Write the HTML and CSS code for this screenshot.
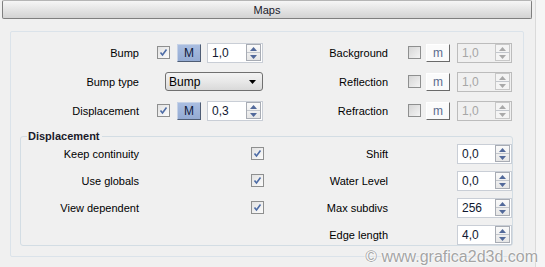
FILE: index.html
```html
<!DOCTYPE html>
<html>
<head>
<meta charset="utf-8">
<link rel="stylesheet" href="styles.css">
</head>
<body>
<div class="app">
  <div class="main">
    <div class="rollout-header">Maps</div>
    <div class="panel">
      <div class="top-grid">
        <div class="label">Bump</div>
        <div class="ctrls ctrls-left">
          <span class="check checked"><svg viewBox="0 0 11 11" width="11" height="11"><path d="M2.5 5.5 L4.5 8 L8.5 2.5" fill="none" stroke="#4d6ca6" stroke-width="1.6"/></svg></span>
          <span class="mbtn on">M</span>
          <span class="spin"><span class="val">1,0</span><span class="arrows"><span class="up"><svg viewBox="0 0 7 4" width="7" height="4"><path d="M0 4 L3.5 0 L7 4Z" fill="#52699a"/></svg></span><span class="dn"><svg viewBox="0 0 7 4" width="7" height="4"><path d="M0 0 L3.5 4 L7 0Z" fill="#52699a"/></svg></span></span></span>
        </div>
        <div class="label">Background</div>
        <div class="ctrls ctrls-right">
          <span class="check"></span>
          <span class="mbtn off">m</span>
          <span class="spin disabled"><span class="val">1,0</span><span class="arrows"><span class="up"><svg viewBox="0 0 7 4" width="7" height="4"><path d="M0 4 L3.5 0 L7 4Z" fill="#a9a9a9"/></svg></span><span class="dn"><svg viewBox="0 0 7 4" width="7" height="4"><path d="M0 0 L3.5 4 L7 0Z" fill="#a9a9a9"/></svg></span></span></span>
        </div>

        <div class="label">Bump type</div>
        <div class="ctrls ctrls-left">
          <span class="dropdown"><span>Bump</span><svg viewBox="0 0 7 4" width="7" height="4"><path d="M0 0 L3.5 4 L7 0Z" fill="#000"/></svg></span>
        </div>
        <div class="label">Reflection</div>
        <div class="ctrls ctrls-right">
          <span class="check"></span>
          <span class="mbtn off">m</span>
          <span class="spin disabled"><span class="val">1,0</span><span class="arrows"><span class="up"><svg viewBox="0 0 7 4" width="7" height="4"><path d="M0 4 L3.5 0 L7 4Z" fill="#a9a9a9"/></svg></span><span class="dn"><svg viewBox="0 0 7 4" width="7" height="4"><path d="M0 0 L3.5 4 L7 0Z" fill="#a9a9a9"/></svg></span></span></span>
        </div>

        <div class="label">Displacement</div>
        <div class="ctrls ctrls-left">
          <span class="check checked"><svg viewBox="0 0 11 11" width="11" height="11"><path d="M2.5 5.5 L4.5 8 L8.5 2.5" fill="none" stroke="#4d6ca6" stroke-width="1.6"/></svg></span>
          <span class="mbtn on">M</span>
          <span class="spin"><span class="val">0,3</span><span class="arrows"><span class="up"><svg viewBox="0 0 7 4" width="7" height="4"><path d="M0 4 L3.5 0 L7 4Z" fill="#52699a"/></svg></span><span class="dn"><svg viewBox="0 0 7 4" width="7" height="4"><path d="M0 0 L3.5 4 L7 0Z" fill="#52699a"/></svg></span></span></span>
        </div>
        <div class="label">Refraction</div>
        <div class="ctrls ctrls-right">
          <span class="check"></span>
          <span class="mbtn off">m</span>
          <span class="spin disabled"><span class="val">1,0</span><span class="arrows"><span class="up"><svg viewBox="0 0 7 4" width="7" height="4"><path d="M0 4 L3.5 0 L7 4Z" fill="#a9a9a9"/></svg></span><span class="dn"><svg viewBox="0 0 7 4" width="7" height="4"><path d="M0 0 L3.5 4 L7 0Z" fill="#a9a9a9"/></svg></span></span></span>
        </div>
      </div>

      <div class="group">
        <div class="group-title">Displacement</div>
        <div class="group-grid">
          <div class="label">Keep continuity</div>
          <div class="cell-end"><span class="check checked"><svg viewBox="0 0 11 11" width="11" height="11"><path d="M2.5 5.5 L4.5 8 L8.5 2.5" fill="none" stroke="#4d6ca6" stroke-width="1.6"/></svg></span></div>
          <div class="label">Shift</div>
          <div class="cell-end"><span class="spin wide"><span class="val">0,0</span><span class="arrows"><span class="up"><svg viewBox="0 0 7 4" width="7" height="4"><path d="M0 4 L3.5 0 L7 4Z" fill="#52699a"/></svg></span><span class="dn"><svg viewBox="0 0 7 4" width="7" height="4"><path d="M0 0 L3.5 4 L7 0Z" fill="#52699a"/></svg></span></span></span></div>

          <div class="label">Use globals</div>
          <div class="cell-end"><span class="check checked"><svg viewBox="0 0 11 11" width="11" height="11"><path d="M2.5 5.5 L4.5 8 L8.5 2.5" fill="none" stroke="#4d6ca6" stroke-width="1.6"/></svg></span></div>
          <div class="label">Water Level</div>
          <div class="cell-end"><span class="spin wide"><span class="val">0,0</span><span class="arrows"><span class="up"><svg viewBox="0 0 7 4" width="7" height="4"><path d="M0 4 L3.5 0 L7 4Z" fill="#52699a"/></svg></span><span class="dn"><svg viewBox="0 0 7 4" width="7" height="4"><path d="M0 0 L3.5 4 L7 0Z" fill="#52699a"/></svg></span></span></span></div>

          <div class="label">View dependent</div>
          <div class="cell-end"><span class="check checked"><svg viewBox="0 0 11 11" width="11" height="11"><path d="M2.5 5.5 L4.5 8 L8.5 2.5" fill="none" stroke="#4d6ca6" stroke-width="1.6"/></svg></span></div>
          <div class="label">Max subdivs</div>
          <div class="cell-end"><span class="spin wide"><span class="val">256</span><span class="arrows"><span class="up"><svg viewBox="0 0 7 4" width="7" height="4"><path d="M0 4 L3.5 0 L7 4Z" fill="#52699a"/></svg></span><span class="dn"><svg viewBox="0 0 7 4" width="7" height="4"><path d="M0 0 L3.5 4 L7 0Z" fill="#52699a"/></svg></span></span></span></div>

          <div></div>
          <div></div>
          <div class="label">Edge length</div>
          <div class="cell-end"><span class="spin wide"><span class="val">4,0</span><span class="arrows"><span class="up"><svg viewBox="0 0 7 4" width="7" height="4"><path d="M0 4 L3.5 0 L7 4Z" fill="#52699a"/></svg></span><span class="dn"><svg viewBox="0 0 7 4" width="7" height="4"><path d="M0 0 L3.5 4 L7 0Z" fill="#52699a"/></svg></span></span></span></div>
        </div>
      </div>
    </div>
  </div>
  <div class="track"></div>
</div>
<div class="watermark">© www.grafica2d3d.com</div>
</body>
</html>
```

FILE: styles.css
```css
* { box-sizing: border-box; }
html, body { margin: 0; padding: 0; }
body {
  width: 545px;
  height: 267px;
  overflow: hidden;
  position: relative;
  background: #f0f0f0;
  font-family: "Liberation Sans", Arial, sans-serif;
  font-size: 11px;
  color: #000;
}
.app {
  display: flex;
  height: 267px;
}
.main {
  width: 535px;
  background: #f0f0f0;
}
.track {
  width: 10px;
  border-left: 1px solid #dadada;
  background: #f5f5f5;
}
.rollout-header {
  margin: 0 3px 0 2px;
  height: 19px;
  border: 1px solid #7f7f7f;
  border-top-color: #b5b5b5;
  border-radius: 2px;
  background: linear-gradient(#f6f6f6, #e6e6e6 45%, #d3d3d3);
  text-align: center;
  line-height: 18px;
  color: #1a1a2a;
}
.panel {
  margin: 12px 11px 0 10px;
  height: 226px;
  border: 1px solid #dbe3ea;
  border-radius: 2px;
}
.top-grid {
  display: grid;
  grid-template-columns: 128px 124px 125px 124px;
  grid-auto-rows: 29px;
  padding-top: 6px;
  align-items: center;
}
.label {
  text-align: right;
  white-space: nowrap;
}
.ctrls {
  display: flex;
  align-items: center;
}
.ctrls-left { padding-left: 18px; }
.ctrls-right { padding-left: 20px; }
.ctrls-left .mbtn { margin-left: 7px; }
.ctrls-left .spin { margin-left: 6px; width: 56px; }
.ctrls-right .mbtn { margin-left: 5px; }
.ctrls-right .spin { margin-left: 7px; width: 55px; }

.check {
  width: 13px;
  height: 13px;
  border: 1px solid #8e8f8f;
  background: linear-gradient(135deg, #d6d6d6, #f4f4f4);
  display: inline-flex;
  align-items: center;
  justify-content: center;
  flex: none;
}
.check.checked {
  background: linear-gradient(135deg, #e2e2e2, #fbfbfb);
}
.check svg { display: block; }

.mbtn {
  width: 24px;
  height: 18px;
  display: inline-flex;
  align-items: center;
  justify-content: center;
  font-size: 12px;
  flex: none;
}
.mbtn.on {
  background: linear-gradient(#a9bde0, #94abd3);
  border: 1px solid #c6d2e6;
  border-right-color: #4f5d74;
  border-bottom-color: #4f5d74;
  color: #0e1a3a;
}
.mbtn.off {
  background: #fbfbfb;
  border: 1px solid #ffffff;
  border-right-color: #6a6a6a;
  border-bottom-color: #6a6a6a;
  color: #5c6c8e;
}

.spin {
  height: 20px;
  display: inline-flex;
  align-items: center;
  background: #fff;
  border: 1px solid #c9ced6;
  flex: none;
}
.spin .val {
  flex: 1;
  padding-left: 4px;
  font-size: 12px;
  color: #101830;
}
.spin .arrows {
  width: 15px;
  height: 17px;
  margin-right: 1px;
  border: 1px solid #a8acb4;
  display: flex;
  flex-direction: column;
  background: linear-gradient(#fafafa, #e6e6e6);
}
.spin .up, .spin .dn {
  flex: 1;
  display: flex;
  align-items: center;
  justify-content: center;
}
.spin .up { border-bottom: 1px solid #c2c6cc; }
.spin .arrows svg { display: block; }
.spin.disabled {
  background: #f0f0f0;
  border-color: #bcbcbc;
}
.spin.disabled .val { color: #a6a6a6; }
.spin.disabled .arrows {
  border-color: #c8c8c8;
  background: #f4f4f4;
}
.spin.wide { width: 55px; }

.dropdown {
  margin-left: 8px;
  width: 98px;
  height: 19px;
  border: 1px solid #707070;
  border-radius: 3px;
  background: linear-gradient(#f3f3f3, #e8e8e8 50%, #d9d9d9);
  display: flex;
  align-items: center;
  justify-content: space-between;
  padding: 0 6px 0 3px;
  font-size: 12px;
}
.dropdown svg { display: block; }

.group {
  position: relative;
  margin: 11px 10px 0 9px;
  height: 110px;
  border: 1px solid #d3dde4;
  border-radius: 3px;
}
.group-title {
  position: absolute;
  left: 6px;
  top: -8px;
  padding: 0 2px 0 1px;
  background: #f0f0f0;
  font-weight: bold;
  font-size: 11px;
  line-height: 14px;
  color: #1a1a2a;
}
.group-grid {
  display: grid;
  grid-template-columns: 118px 125px 124px 124px;
  grid-auto-rows: 27px;
  padding-top: 3px;
  align-items: center;
}
.cell-end {
  display: flex;
  justify-content: flex-end;
  align-items: center;
}

.watermark {
  position: absolute;
  right: 7px;
  bottom: 1px;
  font-family: "Liberation Sans", Arial, sans-serif;
  font-size: 16px;
  color: #a4a4a4;
  text-shadow: 0 0 2px #fff, 0 0 2px #fff, 0 0 1px #fff;
  white-space: nowrap;
}
```
